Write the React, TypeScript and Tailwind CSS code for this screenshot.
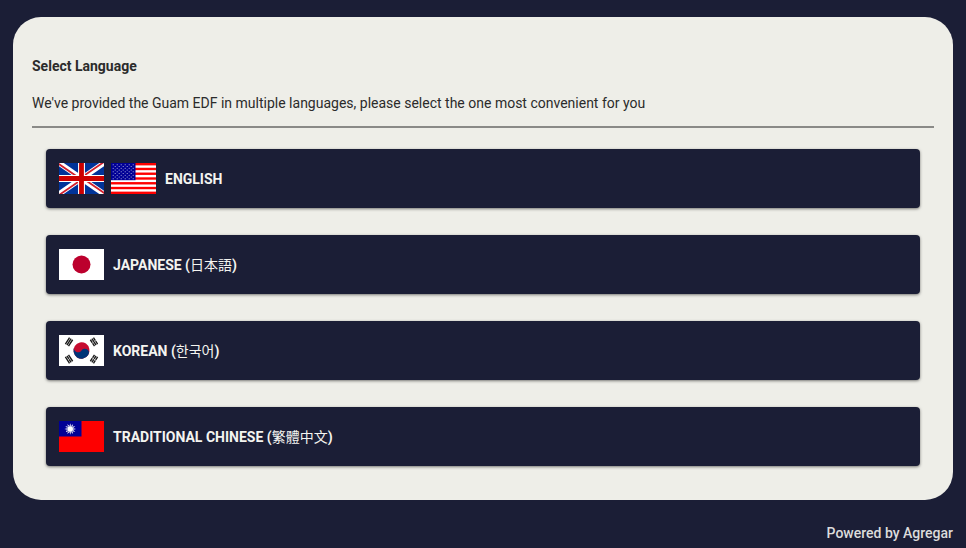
import React from "react";

const FlagUK = () => (
  <svg
    viewBox="0 0 60 40"
    preserveAspectRatio="none"
    className="h-[31px] w-[45px] shrink-0"
    aria-hidden="true"
  >
    <clipPath id="uk-saltire">
      <path d="M30 20H60V40ZM30 20V40H0ZM30 20H0V0ZM30 20V0H60Z" />
    </clipPath>
    <rect width="60" height="40" fill="#003399" />
    <path d="M0 0L60 40M60 0L0 40" stroke="#fff" strokeWidth="7" />
    <path
      d="M0 0L60 40M60 0L0 40"
      stroke="#d21f2c"
      strokeWidth="4.6"
      clipPath="url(#uk-saltire)"
    />
    <path d="M30 0V40M0 20H60" stroke="#fff" strokeWidth="9.2" />
    <path d="M30 0V40M0 20H60" stroke="#cc0000" strokeWidth="6.4" />
  </svg>
);

const FlagUS = () => {
  const stars = [];
  for (let row = 0; row < 9; row++) {
    const cols = row % 2 === 0 ? 6 : 5;
    for (let col = 0; col < cols; col++) {
      stars.push(
        <circle
          key={`${row}-${col}`}
          cx={2.2 + col * 4 + (row % 2) * 2}
          cy={1.75 + row * 1.75}
          r="0.6"
        />
      );
    }
  }

  return (
    <svg
      viewBox="0 0 45 31"
      preserveAspectRatio="none"
      className="h-[31px] w-[45px] shrink-0"
      aria-hidden="true"
    >
      <rect width="45" height="31" fill="#fff" />
      {[0, 1, 2, 3, 4, 5, 6].map((i) => (
        <rect
          key={i}
          y={(i * 62) / 13}
          width="45"
          height={31 / 13}
          fill="#ff0000"
        />
      ))}
      <rect width="24.5" height="17.2" fill="#000095" />
      <g fill="#b4b4dc">{stars}</g>
    </svg>
  );
};

const FlagJapan = () => (
  <svg
    viewBox="0 0 45 31"
    className="h-[31px] w-[45px] shrink-0"
    aria-hidden="true"
  >
    <rect width="45" height="31" fill="#fff" />
    <circle cx="22.5" cy="15.5" r="9" fill="#bc002d" />
  </svg>
);

const FlagKorea = () => (
  <svg
    viewBox="-36 -24 72 48"
    preserveAspectRatio="none"
    className="h-[31px] w-[45px] shrink-0"
    aria-hidden="true"
  >
    <rect x="-36" y="-24" width="72" height="48" fill="#fff" />
    <g transform="rotate(-56.31)">
      <path
        d="M-6-27H6M-6-24H6M-6-21H6M-6 21H6M-6 24H6M-6 27H6"
        stroke="#1a1a1a"
        strokeWidth="2.2"
      />
      <path d="M0 19V29" stroke="#fff" />
      <circle r="12.8" fill="#c60c30" />
      <path
        d="M0-12.8A6.4 6.4 0 0 0 0 0A6.4 6.4 0 0 1 0 12.8A12.8 12.8 0 0 1 0-12.8Z"
        fill="#003478"
      />
    </g>
    <g transform="rotate(-123.69)">
      <path
        d="M-6-27H6M-6-24H6M-6-21H6M-6 21H6M-6 24H6M-6 27H6"
        stroke="#1a1a1a"
        strokeWidth="2.2"
      />
      <path d="M0-25.5V-22.5M0 19V22.5M0 25.5V29" stroke="#fff" />
    </g>
  </svg>
);

const FlagTaiwan = () => (
  <svg
    viewBox="0 0 45 31"
    preserveAspectRatio="none"
    className="h-[31px] w-[45px] shrink-0"
    aria-hidden="true"
  >
    <rect width="45" height="31" fill="#fe0000" />
    <rect width="22.5" height="15.5" fill="#000095" />
    <g transform="translate(11.25 8)">
      {[0, 30, 60, 90, 120, 150].map((angle) => (
        <path
          key={angle}
          d="M0-5.8L1.5 0L0 5.8L-1.5 0Z"
          fill="#fff"
          transform={`rotate(${angle})`}
        />
      ))}
      <circle r="3.3" fill="#6a6ac0" />
      <circle r="2.7" fill="#fff" />
    </g>
  </svg>
);

const languages = [
  { id: "en", label: "English", native: "", flags: [FlagUK, FlagUS] },
  { id: "ja", label: "Japanese", native: "日本語", flags: [FlagJapan] },
  { id: "ko", label: "Korean", native: "한국어", flags: [FlagKorea] },
  {
    id: "zh-Hant",
    label: "Traditional Chinese",
    native: "繁體中文",
    flags: [FlagTaiwan],
  },
];

const LanguageSelect = () => (
  <div className="min-h-screen bg-[#1b1e36] px-[13px] pt-[17px] font-[Roboto,'Noto_Sans_CJK_TC','Noto_Sans_CJK_KR',sans-serif] text-sm">
    <main className="rounded-[28px] bg-[#eeeee8] px-[19px] pt-[39px] pb-[34px] text-[#2b2b2b]">
      <h1 className="font-bold">Select Language</h1>
      <p className="mt-[17px]">
        We've provided the Guam EDF in multiple languages, please select the
        one most convenient for you
      </p>
      <hr className="mt-[13px] border-t-2 border-[#8a8a87]" />

      {/* Language buttons */}
      <div className="mt-[21px] flex flex-col gap-[27px] px-3.5">
        {languages.map(({ id, label, native, flags }) => (
          <button
            key={id}
            type="button"
            className="flex h-[59px] w-full items-center rounded bg-[#1b1e36] px-[13px] font-bold text-[#f4f4f0] uppercase shadow-[0_1px_3px_rgba(0,0,0,0.5)]"
          >
            <span className="flex gap-[7px]">
              {flags.map((Flag, index) => (
                <Flag key={index} />
              ))}
            </span>
            <span className="ml-[9px]">
              {label}
              {native && (
                <>
                  {" ("}
                  <span lang={id} className="font-normal">
                    {native}
                  </span>
                  )
                </>
              )}
            </span>
          </button>
        ))}
      </div>
    </main>

    <footer className="pt-[23px] text-right font-medium text-[#dcdcdc]">
      Powered by Agregar
    </footer>
  </div>
);

export default LanguageSelect;
